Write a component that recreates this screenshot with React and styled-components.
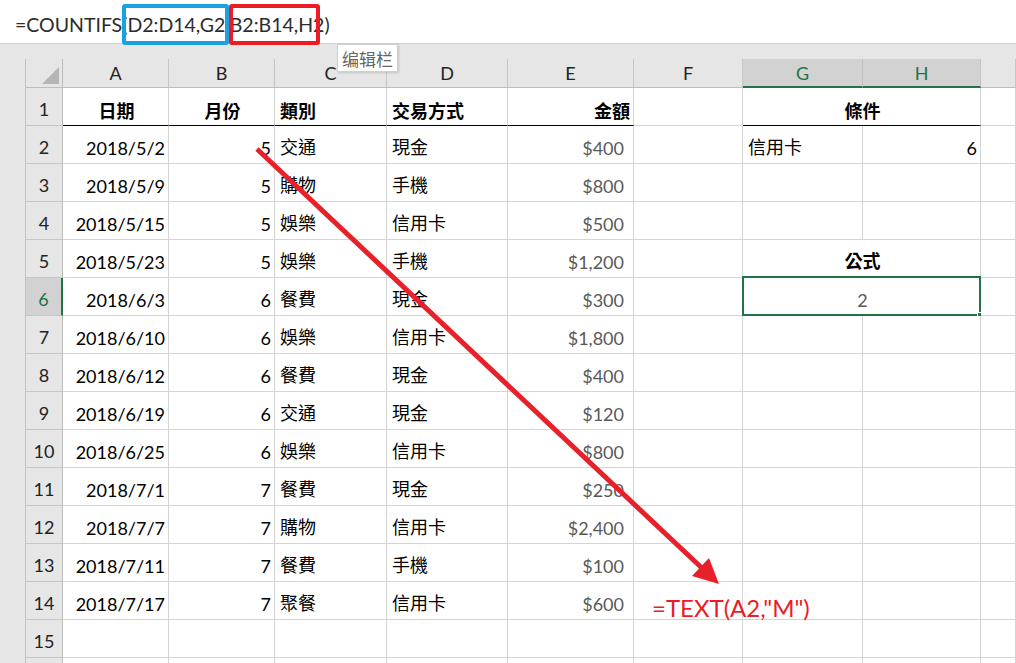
import styled, { createGlobalStyle } from "styled-components";

const GlobalStyle = createGlobalStyle`
  html, body {
    margin: 0;
    padding: 0;
    background: #e6e6e6;
  }
  * {
    box-sizing: border-box;
  }
`;

const cols = [
  { key: "A", width: 106 },
  { key: "B", width: 106 },
  { key: "C", width: 112 },
  { key: "D", width: 121 },
  { key: "E", width: 126 },
  { key: "F", width: 109 },
  { key: "G", width: 120, selected: true },
  { key: "H", width: 118, selected: true },
];

const data = [
  ["2018/5/2", 5, "交通", "現金", "$400"],
  ["2018/5/9", 5, "購物", "手機", "$800"],
  ["2018/5/15", 5, "娛樂", "信用卡", "$500"],
  ["2018/5/23", 5, "娛樂", "手機", "$1,200"],
  ["2018/6/3", 6, "餐費", "現金", "$300"],
  ["2018/6/10", 6, "娛樂", "信用卡", "$1,800"],
  ["2018/6/12", 6, "餐費", "現金", "$400"],
  ["2018/6/19", 6, "交通", "現金", "$120"],
  ["2018/6/25", 6, "娛樂", "信用卡", "$800"],
  ["2018/7/1", 7, "餐費", "現金", "$250"],
  ["2018/7/7", 7, "購物", "信用卡", "$2,400"],
  ["2018/7/11", 7, "餐費", "手機", "$100"],
  ["2018/7/17", 7, "聚餐", "信用卡", "$600"],
];

function SideCells({ row }) {
  if (row === 2) {
    return (
      <>
        <Cell>信用卡</Cell>
        <Cell $align="right">6</Cell>
      </>
    );
  }
  if (row === 5) {
    return <Cell $span={2} $align="center" $bold>公式</Cell>;
  }
  if (row === 6) {
    return (
      <Cell $span={2} $align="center" $muted>
        2
        <Selection />
        <Handle />
      </Cell>
    );
  }
  return (
    <>
      <Cell />
      <Cell />
    </>
  );
}

export default function App() {
  return (
    <Window>
      <GlobalStyle />
      <FormulaBar>
        <FormulaText>
          =COUNTIFS(<Ref $color="#1ba1e2" $l={5} $r={4}>D2:D14,G2</Ref>,<Ref $color="#ec1c24" $l={1} $r={-4}>B2:B14,H2</Ref>)
        </FormulaText>
      </FormulaBar>
      <Tooltip>编辑栏</Tooltip>

      <Body>
        <Sheet>
          <Corner>
            <svg width="17" height="17" viewBox="0 0 17 17">
              <polygon points="17,0 17,17 0,17" fill="#b5b5b5" />
            </svg>
          </Corner>
          {cols.map(c => (
            <ColHead key={c.key} $selected={c.selected}>{c.key}</ColHead>
          ))}
          <ColHead />

          <RowHead>1</RowHead>
          <Cell $align="center" $bold $rule>日期</Cell>
          <Cell $align="center" $bold $rule>月份</Cell>
          <Cell $bold $rule>類別</Cell>
          <Cell $bold $rule>交易方式</Cell>
          <Cell $align="right" $bold $rule>金額</Cell>
          <Cell />
          <Cell $span={2} $align="center" $bold $rule>條件</Cell>
          <Cell />

          {data.map((r, i) => {
            const row = i + 2;
            return [
              <RowHead key={"h" + row} $selected={row === 6}>{row}</RowHead>,
              <Cell key={"a" + row} $align="right">{r[0]}</Cell>,
              <Cell key={"b" + row} $align="right">{r[1]}</Cell>,
              <Cell key={"c" + row}>{r[2]}</Cell>,
              <Cell key={"d" + row}>{r[3]}</Cell>,
              <Cell key={"e" + row} $align="right" $pr={9} $muted>{r[4]}</Cell>,
              <Cell key={"f" + row} />,
              <SideCells key={"g" + row} row={row} />,
              <Cell key={"x" + row} />,
            ];
          })}

          {[15, 16].map(row => [
            <RowHead key={"h" + row}>{row === 15 ? row : ""}</RowHead>,
            ...cols.map(c => <Cell key={c.key + row} />),
            <Cell key={"x" + row} />,
          ])}
        </Sheet>
      </Body>

      <Arrow width="1016" height="663" viewBox="0 0 1016 663">
        <line x1="257" y1="149" x2="704" y2="570" stroke="#e8202a" strokeWidth="5" />
        <polygon points="719,584 692,576 709,558" fill="#e8202a" />
      </Arrow>
      <Note>=TEXT(A2,"M")</Note>
    </Window>
  );
}

const Window = styled.div`
  position: relative;
  width: 1016px;
  height: 663px;
  overflow: hidden;
  background: #e6e6e6;
  font-family: Lato, "Noto Sans CJK TC", sans-serif;
`;

const FormulaBar = styled.div`
  height: 44px;
  background: #ffffff;
  border-bottom: 1px solid #d0d0d0;
  display: flex;
  align-items: center;
  padding-left: 15px;
`;

const FormulaText = styled.div`
  font-size: 19.5px;
  color: #2b2b2b;
  white-space: nowrap;
  padding-top: 5px;
`;

const Ref = styled.span`
  position: relative;

  &::after {
    content: "";
    position: absolute;
    left: ${p => -p.$l}px;
    right: ${p => -p.$r}px;
    top: -9px;
    bottom: -9px;
    border: 4px solid ${p => p.$color};
    border-radius: 3px;
  }
`;

const Tooltip = styled.div`
  position: absolute;
  left: 337px;
  top: 44px;
  width: 61px;
  height: 28px;
  background: #fff;
  border: 1px solid #cfcfcf;
  box-shadow: 1px 1px 2px rgba(0, 0, 0, 0.15);
  display: flex;
  align-items: center;
  justify-content: center;
  font-family: "Noto Sans CJK SC", sans-serif;
  font-size: 17px;
  color: #666;
  z-index: 2;
`;

const Body = styled.div`
  padding: 15px 0 0 25px;
`;

const Sheet = styled.div`
  display: grid;
  grid-template-columns: 37px ${cols.map(c => c.width + "px").join(" ")} 1fr;
  grid-template-rows: 29px repeat(16, 38px);
  border-left: 1px solid #c2c2c2;
`;

const Corner = styled.div`
  background: #e6e6e6;
  border-right: 1px solid #bdbdbd;
  border-bottom: 1px solid #bdbdbd;
  display: flex;
  align-items: flex-end;
  justify-content: flex-end;
  padding: 0 3px 3px 0;
`;

const ColHead = styled.div`
  background: ${p => (p.$selected ? "#d2d2d2" : "#e6e6e6")};
  color: ${p => (p.$selected ? "#217346" : "#222")};
  border-right: 1px solid ${p => (p.$selected ? "#c2c2c2" : "#c6c6c6")};
  border-bottom: ${p => (p.$selected ? "2px solid #217346" : "1px solid #bdbdbd")};
  display: flex;
  align-items: center;
  justify-content: center;
  font-size: 18px;
`;

const RowHead = styled.div`
  background: ${p => (p.$selected ? "#d2d2d2" : "#e6e6e6")};
  color: ${p => (p.$selected ? "#217346" : "#222")};
  border-right: ${p => (p.$selected ? "2px solid #217346" : "1px solid #bdbdbd")};
  border-bottom: 1px solid #c6c6c6;
  display: flex;
  align-items: flex-end;
  justify-content: center;
  padding-bottom: 5px;
  font-size: 18px;
`;

const Cell = styled.div`
  position: relative;
  grid-column: span ${p => p.$span || 1};
  background: #fff;
  border-right: 1px solid #d4d4d4;
  border-bottom: 1px solid ${p => (p.$rule ? "#000" : "#d4d4d4")};
  display: flex;
  align-items: flex-end;
  justify-content: ${p =>
    p.$align === "right" ? "flex-end" : p.$align === "center" ? "center" : "flex-start"};
  padding: 0 ${p => p.$pr ?? 3}px ${p => (p.$rule ? 2 : 4)}px 5px;
  font-size: 18px;
  font-weight: ${p => (p.$bold ? 700 : 400)};
  color: ${p => (p.$muted ? "#595959" : "#000")};
  white-space: nowrap;
`;

const Selection = styled.div`
  position: absolute;
  left: -1px;
  top: -2px;
  right: -1px;
  bottom: -1px;
  border: 2px solid #217346;
`;

const Handle = styled.div`
  position: absolute;
  right: -4px;
  bottom: -4px;
  width: 7px;
  height: 7px;
  background: #217346;
  border: 1px solid #fff;
`;

const Arrow = styled.svg`
  position: absolute;
  left: 0;
  top: 0;
  pointer-events: none;
`;

const Note = styled.div`
  position: absolute;
  left: 652px;
  top: 593px;
  font-size: 24px;
  color: #ec1c24;
  white-space: nowrap;
`;
